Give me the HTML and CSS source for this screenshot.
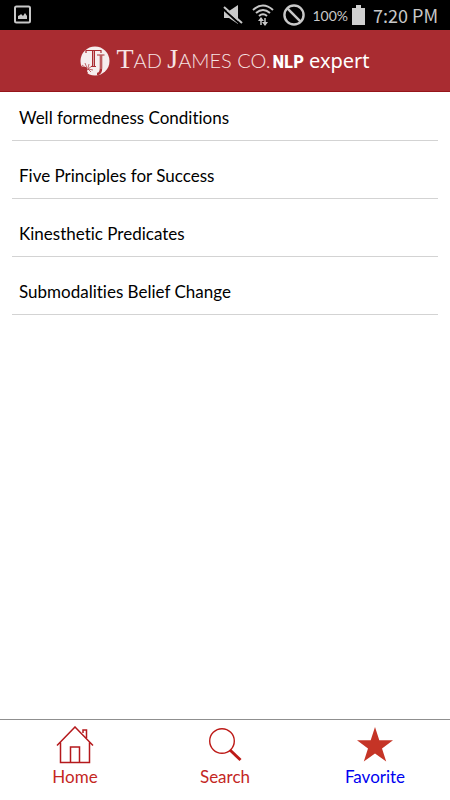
FILE: index.html
```html
<!DOCTYPE html>
<html lang="en">
  <head>
    <meta charset="UTF-8" />
    <meta name="viewport" content="width=device-width, initial-scale=1.0" />
    <title>NLP expert</title>
    <link rel="stylesheet" href="styles.css">
  </head>
  <body>
    <div class="status-bar">
      <svg width="18" height="20" viewBox="0 0 18 20">
        <rect x="1" y="1.5" width="15" height="16" rx="1.5" fill="none" stroke="#c8c8c8" stroke-width="2" />
        <path d="M4 14v-3l2-1 1-1 2 2 2-3 2 3v3z" fill="#c8c8c8" />
      </svg>
      <div class="status-right">
        <svg class="mute" width="20" height="20" viewBox="0 0 20 20">
          <path d="M1 6h5l9-6v19l-9-6H1z" fill="#c8c8c8" />
          <path d="M0 4l18 16" stroke="#000" stroke-width="2" />
          <path d="M1 2l18 16" stroke="#c8c8c8" stroke-width="2" />
        </svg>
        <svg class="wifi" width="22" height="22" viewBox="0 0 22 22">
          <g fill="none" stroke="#c8c8c8" stroke-width="2">
            <path d="M1 6q10-9 20 0M4 9q7-6 14 0M7 12q4-3.5 8 0" />
            <path d="M9 21v-7M13 14v7" stroke-width="1.5" />
          </g>
          <path d="M6 17l3-4 3 4zM10 18h6l-3 4z" fill="#c8c8c8" />
        </svg>
        <svg class="block" width="22" height="22" viewBox="0 0 20 20">
          <circle cx="10" cy="10" r="8.7" fill="none" stroke="#c8c8c8" stroke-width="2.2" />
          <path d="M4 4l12 12" stroke="#c8c8c8" stroke-width="2.2" />
        </svg>
        <span class="battery-text">100%</span>
        <svg class="battery" width="13" height="20" viewBox="0 0 13 20">
          <path d="M4 0h5v3h4v17H0V3h4z" fill="#d0d0d0" />
        </svg>
        <span class="clock">7:20 PM</span>
      </div>
    </div>

    <header class="header">
      <svg class="logo" width="30" height="30" viewBox="0 0 30 30">
        <circle cx="15" cy="15" r="14.5" fill="#f6eeee" />
        <g fill="none" stroke="#a92c31">
          <path d="M6 7V4.5h15V7" stroke-width="1.2" />
          <path d="M13.5 4.5V20" stroke-width="3" />
          <path d="M13.5 5v15" stroke="#f6eeee" stroke-width=".6" />
          <path d="M11 20.5h5M17 9h7.5" stroke-width="1" />
          <path d="M21 9v13q0 6-4 6" stroke-width="2.5" />
          <path d="M21 9v14" stroke="#f6eeee" stroke-width=".5" />
          <path d="M2 19l4 3M5 17l2 5M9 18l-1 4M12 20l-4 3M13 24l-5-1M11 26l-3-3" stroke-width=".7" />
        </g>
        <path d="M1 20l3 1 2 0 2 2-1 2 1 2-2 1Q3 26 1 20" fill="#a92c31" />
      </svg>
      <h1 class="title">
        <span class="company"><span class="cap">T</span>AD <span class="cap">J</span>AMES CO.</span><span class="nlp">NLP</span> <span class="expert">expert</span>
      </h1>
    </header>

    <main class="content">
      <ul class="list">
        <li><a href="#">Well formedness Conditions</a></li>
        <li><a href="#">Five Principles for Success</a></li>
        <li><a href="#">Kinesthetic Predicates</a></li>
        <li><a href="#">Submodalities Belief Change</a></li>
      </ul>
    </main>

    <nav class="tabs">
      <a class="tab" href="#">
        <svg width="38" height="38" viewBox="0 0 38 38" fill="none" stroke="#b5191c" stroke-width="1.5">
          <path d="M1 19.5L19 1l18 18.5M4.5 16.5v20h29v-20M14.5 36.5V21h9v15.5M27 7V4h3.5v8" />
        </svg>
        Home
      </a>
      <a class="tab" href="#">
        <svg width="38" height="38" viewBox="0 0 38 38" fill="none" stroke="#bd1a17">
          <circle cx="16" cy="15" r="12.3" stroke-width="1.4" />
          <path d="M24 24l10.5 10" stroke-width="3" />
        </svg>
        Search
      </a>
      <a class="tab active" href="#">
        <svg width="38" height="38" viewBox="0 0 38 38">
          <path d="M19 1l4.3 13.3H37L26 22.5 30.2 35.5 19 27.5 7.8 35.5 12 22.5 1 14.3h13.7z" fill="#c53426" />
        </svg>
        Favorite
      </a>
    </nav>
  </body>
</html>
```
FILE: styles.css
```css
* {
  box-sizing: border-box;
}
body {
  margin: 0;
  min-height: 100vh;
  display: flex;
  flex-direction: column;
  background: #fff;
  color: #000;
  font-family: Lato, sans-serif;
  font-variant-ligatures: none;
}
a {
  color: inherit;
  text-decoration: none;
}
.status-bar {
  height: 30px;
  padding: 0 12px 0 14px;
  display: flex;
  align-items: center;
  justify-content: space-between;
  background: #000;
  color: #c8c8c8;
}
.status-right {
  display: flex;
  align-items: center;
}
.mute,
.wifi {
  margin-right: 9px;
}
.block {
  margin-right: 7px;
}
.battery-text {
  font-size: 14px;
  margin-right: 4px;
}
.battery {
  margin-right: 8px;
}
.clock {
  font-family: "Noto Sans CJK JP", sans-serif;
  font-size: 18px;
  line-height: 30px;
}
.header {
  height: 62px;
  display: flex;
  align-items: center;
  justify-content: center;
  gap: 6px;
  background: #a92c31;
  border-bottom: 1px solid #96151a;
  color: #fff;
}
.title {
  margin: 0;
  font-size: 20px;
  font-weight: 400;
  line-height: 30px;
  white-space: nowrap;
}
.company {
  font-weight: 300;
  color: #f6e4e4;
}
.cap {
  font-family: "Liberation Serif", serif;
  font-size: 28px;
}
.nlp {
  font-family: "Roboto Condensed", Roboto, sans-serif;
  font-size: 19px;
  font-weight: 700;
  margin-left: 2px;
}
.expert {
  font-family: "Noto Sans", sans-serif;
}
.content {
  flex: 1;
  padding: 14px 12px;
}
.list {
  list-style: none;
  margin: 0;
  padding: 0;
}
.list li {
  padding: 0 7px 10px;
  border-bottom: 1px solid #d3d3d3;
  font-size: 17px;
  line-height: 24px;
}
.list li + li {
  padding-top: 23px;
}
.list a {
  display: block;
}
.tabs {
  display: flex;
  height: 81px;
  border-top: 1px solid #8f8f8f;
}
.tab {
  flex: 1;
  display: flex;
  flex-direction: column;
  align-items: center;
  padding-top: 6px;
  color: #c4271f;
  font-size: 17px;
  line-height: 26px;
}
.active {
  color: #0000f0;
}
```
